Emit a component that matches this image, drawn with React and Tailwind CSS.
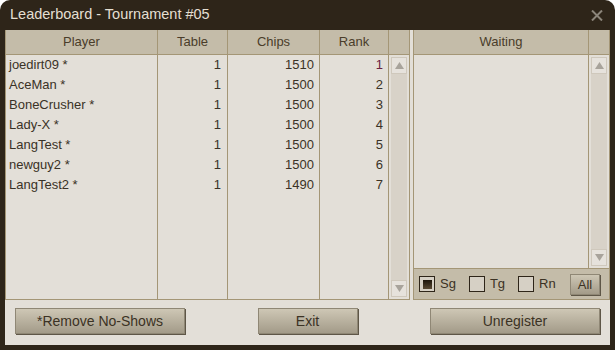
import React from "react";

const players = [
  { name: "joedirt09 *", table: 1, chips: 1510, rank: 1 },
  { name: "AceMan *", table: 1, chips: 1500, rank: 2 },
  { name: "BoneCrusher *", table: 1, chips: 1500, rank: 3 },
  { name: "Lady-X *", table: 1, chips: 1500, rank: 4 },
  { name: "LangTest *", table: 1, chips: 1500, rank: 5 },
  { name: "newguy2 *", table: 1, chips: 1500, rank: 6 },
  { name: "LangTest2 *", table: 1, chips: 1490, rank: 7 },
];

const ScrollButton = ({ down }) => (
  <div className="h-[17px] w-full bg-[#e6e2dc] border border-[#cfc8bc] flex items-center justify-center">
    <svg width="9" height="7" viewBox="0 0 9 7">
      {down ? (
        <polygon points="0,0 9,0 4.5,7" fill="#a8a39b" />
      ) : (
        <polygon points="0,7 9,7 4.5,0" fill="#a8a39b" />
      )}
    </svg>
  </div>
);

const ScrollBar = () => (
  <div className="h-full p-[2px] bg-[#e3dfd8]">
    <div className="h-full flex flex-col justify-between bg-[#d8d2c8]">
      <ScrollButton />
      <ScrollButton down />
    </div>
  </div>
);

// size classes come in through className so nothing clashes
const Button = ({ children, className = "" }) => (
  <button
    className={
      "bg-gradient-to-b from-[#cec7b5] to-[#a39b89] border border-[#8f8775] shadow-[1px_1px_0_#5e5647] text-[#3b3224] " +
      className
    }
  >
    {children}
  </button>
);

const CheckBox = ({ label, checked }) => (
  <div className="flex items-center gap-[5px]">
    <div className="w-[16px] h-[16px] border-[1.5px] border-[#2e2519] bg-[#d6d0c5] flex items-center justify-center">
      {checked && <div className="w-[9px] h-[9px] bg-gradient-to-b from-[#1e160c] to-[#5a4a34]" />}
    </div>
    <span className="text-[13px] text-[#3b3224]">{label}</span>
  </div>
);

export default function App() {
  return (
    <div
      className="w-[615px] h-[350px] bg-[#2e2519] rounded-t-[10px] flex flex-col"
      style={{ fontFamily: '"Liberation Sans", Arial, sans-serif' }}
    >
      {/* title bar */}
      <div className="h-[30px] flex items-center justify-between pl-[10px] pr-[12px]">
        <span className="text-[14.5px] text-[#e4dfd2]">Leaderboard - Tournament #05</span>
        <svg width="12" height="11" viewBox="0 0 12 11">
          <path d="M1 0.5 L11 10.5 M11 0.5 L1 10.5" stroke="#8b857a" strokeWidth="2" />
        </svg>
      </div>

      <div className="flex-1 mx-[5px] mb-[5px] bg-[#e3dfd8] flex flex-col">
        <div className="flex h-[270px]">
          {/* leaderboard table */}
          <div className="w-[405px] border-l border-b border-[#a49676] flex flex-col">
            <div className="flex h-[25px] bg-[#c4bca9] border-b border-[#a49676] text-[13px] text-[#4a3d2a]">
              <div className="w-[152px] border-r border-[#a49676] flex items-center justify-center">Player</div>
              <div className="w-[70px] border-r border-[#a49676] flex items-center justify-center">Table</div>
              <div className="w-[92px] border-r border-[#a49676] flex items-center justify-center">Chips</div>
              <div className="w-[69px] border-r border-[#a49676] flex items-center justify-center">Rank</div>
              <div className="w-[21px] border-r border-[#a49676]" />
            </div>
            <div className="flex flex-1 text-[13px] text-[#3a3226]">
              <div className="w-[152px] border-r border-[#a49676] pl-[3px]">
                {players.map((p) => (
                  <div key={p.name} className="h-[20px] leading-[20px]">{p.name}</div>
                ))}
              </div>
              <div className="w-[70px] border-r border-[#a49676] pr-[6px] text-right">
                {players.map((p) => (
                  <div key={p.name} className="h-[20px] leading-[20px]">{p.table}</div>
                ))}
              </div>
              <div className="w-[92px] border-r border-[#a49676] pr-[5px] text-right">
                {players.map((p) => (
                  <div key={p.name} className="h-[20px] leading-[20px]">{p.chips}</div>
                ))}
              </div>
              <div className="w-[69px] border-r border-[#a49676] pr-[5px] text-right">
                {players.map((p) => (
                  <div
                    key={p.name}
                    className={"h-[20px] leading-[20px] " + (p.rank === 1 ? "text-[#6a2242]" : "")}
                  >
                    {p.rank}
                  </div>
                ))}
              </div>
              <div className="w-[21px] border-r border-[#a49676]">
                <ScrollBar />
              </div>
            </div>
          </div>

          {/* waiting list */}
          <div className="ml-[3px] w-[197px] border-l border-r border-b border-[#a49676] flex flex-col">
            <div className="flex h-[25px] bg-[#c4bca9] border-b border-[#a49676] text-[13px] text-[#4a3d2a]">
              <div className="flex-1 border-r border-[#a49676] flex items-center justify-center">Waiting</div>
              <div className="w-[20px]" />
            </div>
            <div className="flex flex-1">
              <div className="flex-1 border-r border-[#a49676]" />
              <div className="w-[20px]">
                <ScrollBar />
              </div>
            </div>
            <div className="h-[31px] bg-[#c4bca9] border-t border-[#a49676] flex items-center pl-[5px] pr-[9px]">
              <CheckBox label="Sg" checked />
              <div className="w-[13px]" />
              <CheckBox label="Tg" />
              <div className="w-[13px]" />
              <CheckBox label="Rn" />
              <Button className="ml-auto w-[30px] h-[21px] text-[13px] leading-none">All</Button>
            </div>
          </div>
        </div>

        {/* bottom buttons */}
        <div className="flex-1 flex items-start justify-between pt-[8px] px-[10px]">
          <Button className="w-[170px] h-[26px] text-[14px]">*Remove No-Shows</Button>
          <Button className="w-[100px] h-[26px] text-[14px]">Exit</Button>
          <Button className="w-[170px] h-[26px] text-[14px]">Unregister</Button>
        </div>
      </div>
    </div>
  );
}
